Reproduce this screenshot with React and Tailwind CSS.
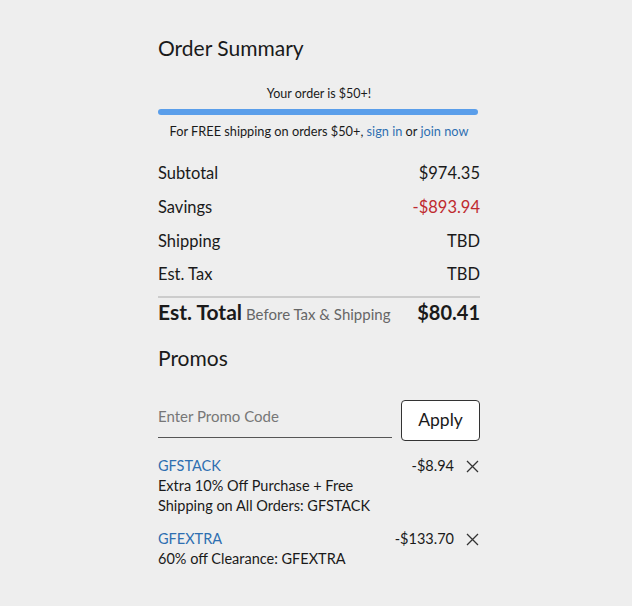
export default function App() {
  const font = { fontFamily: "Lato, 'Noto Sans', sans-serif" };
  return (
    <div className="min-h-[606px] w-[632px] bg-[#eeeeee] text-[#1a1a1a]" style={font}>
      <div className="ml-[158px] w-[322px] pt-[34px]">
        <h2 className="h-[28px] text-[21px] leading-[28px] font-normal">Order Summary</h2>
        <div className="mt-[24px] h-[16px] text-center text-[12.5px] leading-[16px]">Your order is $50+!</div>
        <div className="mt-[7px] h-[6px] w-[320px] rounded-full bg-[#5a9eea]"></div>
        <div className="mt-[8px] h-[16px] text-center text-[12.75px] leading-[16px]">
          For FREE shipping on orders $50+, <span className="text-[#2f6fb1]">sign in</span> or{" "}
          <span className="text-[#2f6fb1]">join now</span>
        </div>
        <div className="mt-[17px] flex flex-col text-[16.5px]">
          <div className="flex h-[34px] items-center justify-between">
            <span>Subtotal</span>
            <span>$974.35</span>
          </div>
          <div className="flex h-[34px] items-center justify-between">
            <span>Savings</span>
            <span className="text-[#bf2a2f]">-$893.94</span>
          </div>
          <div className="flex h-[34px] items-center justify-between">
            <span>Shipping</span>
            <span>TBD</span>
          </div>
          <div className="flex h-[33px] items-center justify-between">
            <span>Est. Tax</span>
            <span>TBD</span>
          </div>
        </div>
        <div className="mt-[5px] h-[2px] w-[322px] bg-[#cccccc]"></div>
        <div className="flex h-[28px] items-center justify-between">
          <div className="flex items-baseline gap-[4px]">
            <span className="text-[21px] font-bold">Est. Total</span>
            <span className="text-[15px] text-[#666666]">Before Tax &amp; Shipping</span>
          </div>
          <span className="text-[20px] font-bold">$80.41</span>
        </div>
        <h2 className="mt-[18px] h-[28px] text-[21px] leading-[28px] font-normal">Promos</h2>
        <div className="mt-[28px] flex items-start justify-between">
          <div className="flex h-[38px] w-[234px] items-center border-b border-[#555555] pb-[4px] text-[15px] text-[#777777]">
            Enter Promo Code
          </div>
          <button className="flex h-[41px] w-[79px] items-center justify-center rounded-[4px] border border-[#333333] bg-white text-[17.5px] text-[#1a1a1a]" style={font}>
            Apply
          </button>
        </div>
        <div className="mt-[15px] flex flex-col gap-[13px] text-[14.5px]">
          <div>
            <div className="flex h-[20px] items-center justify-between">
              <span className="text-[#2f6fb1]">GFSTACK</span>
              <div className="flex items-center gap-[12px]">
                <span>-$8.94</span>
                <XIcon />
              </div>
            </div>
            <div className="leading-[20px]">Extra 10% Off Purchase + Free<br />Shipping on All Orders: GFSTACK</div>
          </div>
          <div>
            <div className="flex h-[20px] items-center justify-between">
              <span className="text-[#2f6fb1]">GFEXTRA</span>
              <div className="flex items-center gap-[12px]">
                <span>-$133.70</span>
                <XIcon />
              </div>
            </div>
            <div className="leading-[20px]">60% off Clearance: GFEXTRA</div>
          </div>
        </div>
      </div>
    </div>
  );
}

function XIcon() {
  return (
    <svg width="13" height="13" viewBox="0 0 13 13" className="mr-[1px]">
      <path d="M1 1 L12 12 M12 1 L1 12" stroke="#333" strokeWidth="1.3" fill="none" />
    </svg>
  );
}
